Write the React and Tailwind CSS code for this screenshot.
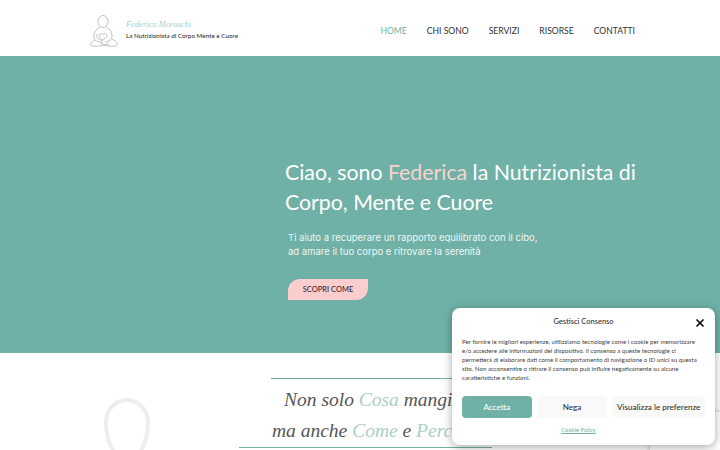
import { X } from 'lucide-react';

const navItems = ['HOME', 'CHI SONO', 'SERVIZI', 'RISORSE', 'CONTATTI'];

function Logo() {
  return (
    <svg width="28" height="34" viewBox="0 0 28 34" fill="none" stroke="#b0b0b0" strokeWidth="0.8" className="shrink-0">
      <ellipse cx="13" cy="7.500" rx="5" ry="6" />
      <path d="M10 13c-5 3-6.500 7-6 11 .4 2.500 3 4 9 4.500M16 13c4 2 6.500 6 6 10-.4 3-3 4.500-7 5" />
      <path d="M7 20c-1 3 1 6 6 6.500" />
      <path d="M13 26c-2.500-1.500-4.500-3.500-3.500-5.500.8-1.400 2.800-1.200 3.500.2.700-1.400 2.700-1.600 3.500-.2 1 2-1 4-3.500 5.500z" />
      <path d="M5 26c-3 1.500-5 3.500-4 5 1 1.500 6 1.500 11 .5l7-2M22 25c3 1.500 6 4 5 6-1 1.500-6 1.500-11 .5l-5-2" />
    </svg>
  );
}

export default function App() {
  return (
    <div className="relative h-[450px] w-[720px] overflow-hidden bg-white font-['Lato',sans-serif]">
      {/* Header */}
      <header className="flex h-14 items-center justify-between pl-[90px] pr-[85px] pt-[6px]">
        <div className="flex items-center gap-[8px]">
          <Logo />
          <div className="mb-[4px]">
            <p className="font-['Liberation_Serif',serif] text-[8.500px] italic leading-3 text-[#a9cfc8]">Federica Moraschi</p>
            <p className="mt-[1px] whitespace-nowrap text-[6.300px] font-medium leading-[10px] text-[#333]">La Nutrizionista di Corpo Mente e Cuore</p>
          </div>
        </div>
        <nav className="flex gap-5 text-[8.600px] leading-4">
          {navItems.map((item, index) => (
            <a key={item} className={index === 0 ? 'text-[#6fb1a6]' : 'text-[#333]'}>{item}</a>
          ))}
        </nav>
      </header>

      {/* Hero */}
      <section className="h-[297px] bg-[#6fb1a6] pl-[285px] pt-[101px]">
        <h1 className="text-[21.300px] leading-[30px] text-white">
          Ciao, sono <span className="text-[#f8d3d0]">Federica</span> la Nutrizionista di<br />
          Corpo, Mente e Cuore
        </h1>
        <p className="mt-[14px] pl-[3px] font-['Inter',sans-serif] text-[9.500px] leading-[14px] text-[#eef6f4]">
          Ti aiuto a recuperare un rapporto equilibrato con il cibo,<br />
          ad amare il tuo corpo e ritrovare la serenità
        </p>
        <a className="ml-[3px] mt-5 flex h-[21px] w-[80px] items-center justify-center rounded-tl-[12px] rounded-br-[12px] bg-[#fccdcd] text-[7.500px] font-medium text-[#3a2a2e]">
          SCOPRI COME
        </a>
      </section>

      {/* Next section */}
      <section className="flex h-[97px]">
        <div className="w-[239px] pl-[104px] pt-[45px]">
          <div className="h-[64px] w-[46px] rounded-[50%/38%_38%_62%_62%] border-[4px] border-[#eeeeee]" />
        </div>
        <div className="w-[253px]">
          <div className="ml-8 mt-[25px] h-px bg-[#6fb1a6]" />
          <div className="mt-[5px] whitespace-nowrap pl-[13px] font-['Liberation_Serif',serif] text-[19.500px] italic leading-[31px] text-[#555]">
            <p className="pl-[32px]">Non solo <span className="text-[#a9cfc8]">Cosa</span> mangi</p>
            <p className="pl-[20px]">ma anche <span className="text-[#a9cfc8]">Come</span> e <span className="text-[#a9cfc8]">Perché</span></p>
          </div>
          <div className="mt-px h-px bg-[#6fb1a6]" />
        </div>
      </section>

      {/* reCAPTCHA badge, mostly behind the consent box */}
      <div className="absolute right-0 top-[412px] h-[60px] w-[70px] bg-white shadow-[0_0_5px_rgba(128,128,128,0.6)]" />

      {/* Cookie consent */}
      <div className="absolute left-[452px] top-[308px] h-[137px] w-[263px] rounded-lg bg-white px-[10px] pt-[7px] shadow-[0_2px_10px_rgba(0,0,0,0.35)]">
        <div className="relative h-5 text-center text-[7.500px] font-medium leading-[13px] text-[#333]">
          Gestisci Consenso
          <X size={12} strokeWidth={3.5} className="absolute right-[-1px] top-[2px] text-[#111]" />
        </div>
        <p className="mt-[2px] whitespace-nowrap text-[6.150px] leading-[9px] text-[#444]">
          Per fornire le migliori esperienze, utilizziamo tecnologie come i cookie per memorizzare<br />
          e/o accedere alle informazioni del dispositivo. Il consenso a queste tecnologie ci<br />
          permetterà di elaborare dati come il comportamento di navigazione o ID unici su questa<br />
          sito. Non acconsentire o ritirare il consenso può influire negativamente su alcune<br />
          caratteristiche e funzioni.
        </p>
        <div className="mt-[14px] flex gap-[5px] text-[8.100px] font-medium">
          <button className="h-[22px] w-[70px] rounded bg-[#6fb1a6] text-white">Accetta</button>
          <button className="h-[22px] w-[71px] rounded bg-[#f9f9f9] text-[#333]">Nega</button>
          <button className="h-[22px] w-[93px] rounded bg-[#f9f9f9] text-[#333]">Visualizza le preferenze</button>
        </div>
        <p className="mt-[8px] pr-[10px] text-center text-[5.800px] text-[#6fb1a6] underline">Cookie Policy</p>
      </div>
    </div>
  );
}
